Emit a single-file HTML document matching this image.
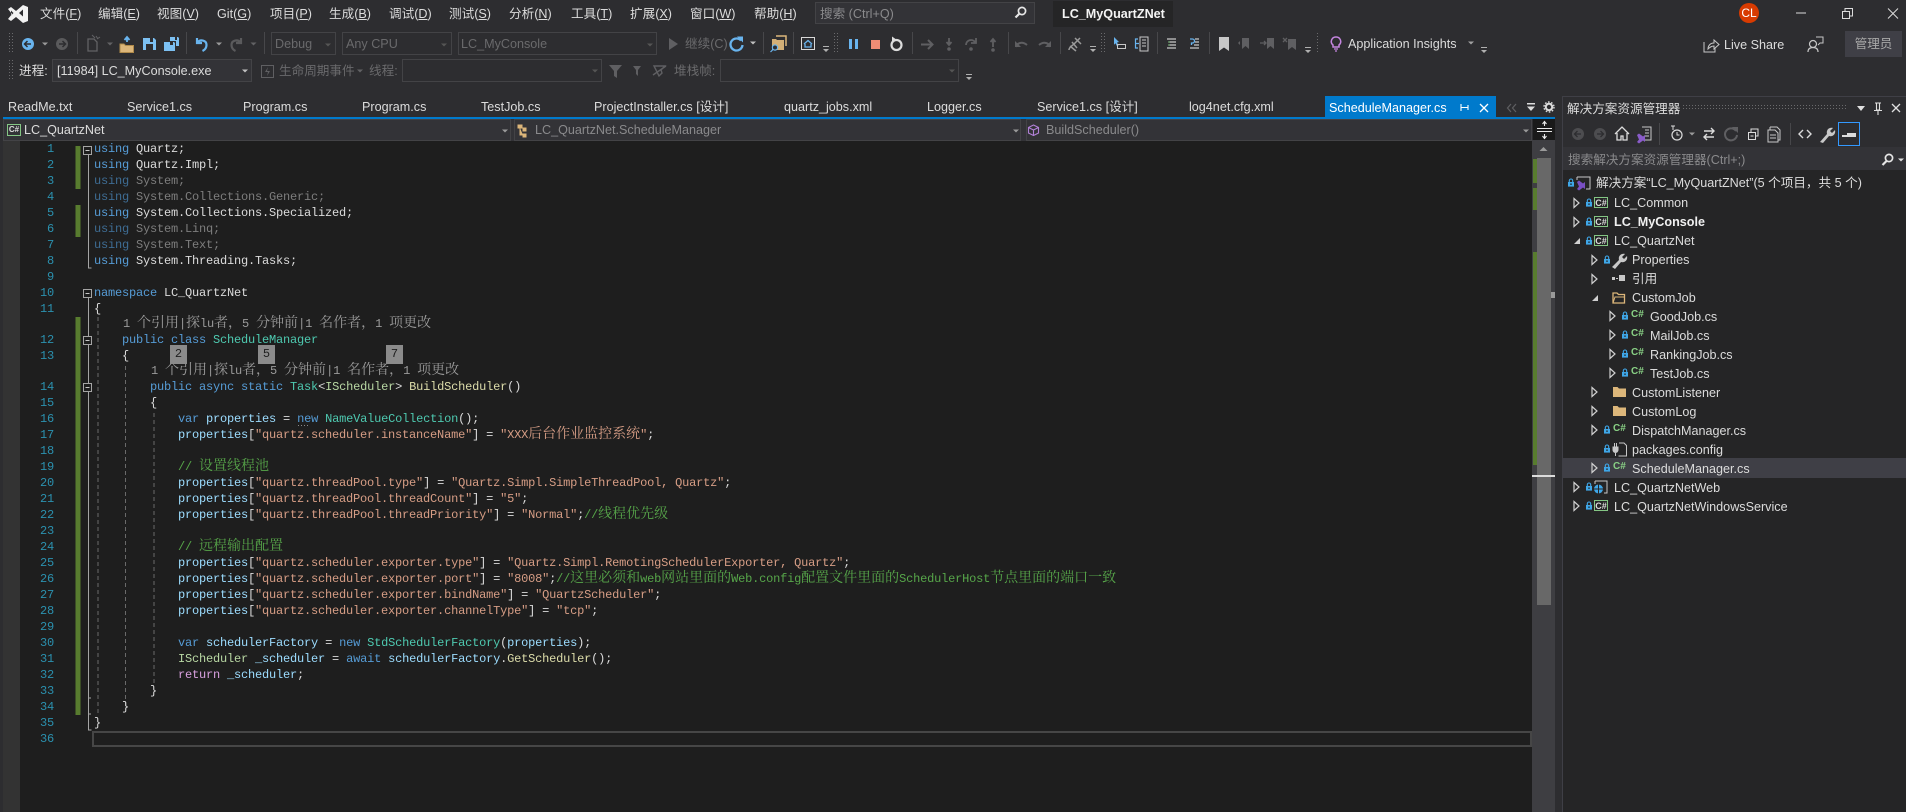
<!DOCTYPE html>
<html><head><meta charset="utf-8"><title>LC_MyQuartZNet</title>
<style>
html,body{margin:0;padding:0;width:1906px;height:812px;overflow:hidden;background:#2d2d30}
#r{position:relative;width:1906px;height:812px;overflow:hidden;font:12.6px/16px "Liberation Sans","Noto Sans CJK SC",sans-serif;color:#dcdcdc}
svg{position:absolute;left:0;top:0}
.t{position:absolute;white-space:nowrap}
.d{color:#6a6a6c}
.m{color:#8a8a8c}
.c{position:absolute;left:94px;white-space:pre;font:12px/16px "Liberation Mono","Noto Serif CJK SC",monospace;letter-spacing:-.2px;color:#dcdcdc}
.c i{font:normal 14px/0 "Noto Serif CJK SC","Noto Sans CJK SC",serif;letter-spacing:0}
.n{position:absolute;left:0;width:54px;text-align:right;font:12px/16px "Liberation Mono",monospace;letter-spacing:-.2px;color:#2b91af}
.k{color:#569cd6}.y{color:#4ec9b0}.v{color:#9cdcfe}.s{color:#d69d85}.g{color:#57a64a}.f{color:#dcdcaa}.b{color:#b8d7a3}.e{color:#d8a0df}.x{color:#3e6c93}.z{color:#7d7d7d}.l{color:#9a9a9a}
.box{position:absolute;background:#8b8b8b;color:#1e1e1e;text-align:center;width:17px;height:19px;font:12px/19px "Liberation Mono",monospace}
</style></head><body><div id="r">
<svg width="1906" height="812" viewBox="0 0 1906 812" fill="none">
<defs>
<pattern id="dots" width="3" height="3" patternUnits="userSpaceOnUse"><rect width="1" height="1" fill="#6a6a6c"/></pattern>
<path id="tri" d="M-3 -1.5h6l-3 3z"/>
<g id="ovf"><path d="M-3 -3h6v1h-6z M-3 0h6l-3 3z" fill="#b0b0b0"/></g>
<g id="lock"><path d="M-1.7 -1v-1.3a1.7 1.7 0 0 1 3.4 0v1.3" stroke="#3fa7e8" stroke-width="1.1"/><rect x="-3" y="-1" width="6" height="4.6" fill="#3fa7e8"/><rect x="-.6" y=".4" width="1.2" height="1.6" fill="#1e1e1e"/></g>
<path id="hollow" d="M-2 -4.5l5 4.5l-5 4.5z" stroke="#d0d0d0" stroke-width="1.2"/>
<path id="solid" d="M3 -3v6h-6z" fill="#d0d0d0"/>
<g id="fold"><path d="M0 1h4.5l1.5 1.5H13V11H0z" fill="#dcb67a"/></g>
<g id="proj"><rect x=".5" y=".5" width="13" height="10" stroke="#84c684" fill="#252526"/></g>
</defs>

<!-- title search -->
<rect x="815.5" y="2.5" width="219" height="21" fill="#333337" stroke="#434346"/>
<circle cx="1022" cy="11" r="3.6" stroke="#e6e6e6" stroke-width="1.7"/><path d="M1019.5 13.5l-4 4" stroke="#e6e6e6" stroke-width="2.2"/>
<rect x="1053" y="1" width="120" height="26" fill="#252526"/>
<!-- VS logo -->
<path d="M8 9l3-2 5 4 7-6 5 2v14l-5 2-7-6-5 4-3-2 4-5z M23 9.5l-4 3.5 4 3.5z M11 10.5v5l2.5-2.5z" fill="#f2f2f2" fill-rule="evenodd"/>
<!-- window controls -->
<circle cx="1749" cy="13" r="10" fill="#d83b01"/>
<path d="M1796 13h10" stroke="#dcdcdc"/>
<rect x="1842.5" y="11.5" width="7" height="7" stroke="#dcdcdc"/><path d="M1845 11v-2.500h7.500v7.500h-2.500" stroke="#dcdcdc"/>
<path d="M1888 8.500l10 10M1898 8.500l-10 10" stroke="#dcdcdc"/>

<!-- grips -->
<rect x="9" y="33" width="4" height="20" fill="url(#dots)"/>
<rect x="9" y="60" width="4" height="20" fill="url(#dots)"/>
<rect x="834" y="33" width="4" height="20" fill="url(#dots)"/>
<rect x="1101" y="33" width="4" height="20" fill="url(#dots)"/>
<rect x="1316" y="33" width="4" height="20" fill="url(#dots)"/>
<!-- separators -->
<path d="M77.500 32v22M186.500 32v22M264.500 32v22M763.500 32v22M793.500 32v22M912.500 32v22M1008.500 32v22M1060.500 32v22M1157.500 32v22M1209.500 32v22" stroke="#47474a"/>

<!-- toolbar 1 icons -->
<circle cx="28" cy="44" r="6" fill="#69b4ee"/><path d="M31 44h-6M27.500 41l-3 3 3 3" stroke="#2d2d30" stroke-width="1.500"/>
<use href="#tri" x="45" y="44" fill="#9a9a9a"/>
<circle cx="62" cy="44" r="6" fill="#5a5a5c"/><path d="M59 44h6M62.500 41l3 3-3 3" stroke="#2d2d30" stroke-width="1.500"/>
<path d="M88 39h6l3 3v9H88z" stroke="#626265" stroke-width="1.300"/><path d="M92 35l3 3M96 36l2 3M100 37l-3 2" stroke="#626265"/>
<use href="#tri" x="110" y="44" fill="#626265"/>
<path d="M120 44h4l1.500 1.500h8v7h-13.500z" fill="#dcb67a" stroke="#b08a4a"/><path d="M127 42v-4m-2.500 2l2.500-3 2.500 3" stroke="#69b4ee" stroke-width="1.800"/>
<path d="M143 38h7v4h3v-4h1l2 2v10h-13z" fill="#7cc0f2"/><rect x="146" y="44" width="7" height="6" fill="#2d2d30"/>
<path d="M164 42h6v3h3v-3h1l1 1v8h-11z" fill="#7cc0f2"/><path d="M170 37h5v3h2v-3h1l1 1v8h-3v-5h-6z" fill="#7cc0f2"/>
<path d="M197 38v5h5M197.500 42.500c2.500-3.500 9-2.500 9 2.500 0 3-2 5-4 6" stroke="#69b4ee" stroke-width="2.200"/>
<use href="#tri" x="219" y="44" fill="#9a9a9a"/>
<path d="M241 38v5h-5M240.500 42.500c-2.500-3.500-9-2.500-9 2.500 0 3 2 5 4 6" stroke="#5a5a5c" stroke-width="2.200"/>
<use href="#tri" x="253.500" y="44" fill="#626265"/>
<!-- combos -->
<rect x="271.500" y="32.500" width="64" height="22" stroke="#434346" fill="#2d2d30"/>
<use href="#tri" x="328" y="45" fill="#555"/>
<rect x="342.500" y="32.500" width="109" height="22" stroke="#434346" fill="#2d2d30"/>
<use href="#tri" x="444" y="45" fill="#555"/>
<rect x="458.500" y="32.500" width="198" height="22" stroke="#434346" fill="#2d2d30"/>
<use href="#tri" x="650" y="45" fill="#555"/>
<path d="M669 38l9 6-9 6z" fill="#5f5f62"/>
<path d="M741 40.500a6 6 0 1 0 1.500 4.500" stroke="#69b4ee" stroke-width="2.300"/><path d="M737 36.500h6v6z" fill="#69b4ee"/>
<use href="#tri" x="753" y="43" fill="#c0c0c0"/>
<path d="M772 39h4l1 1h7v10h-12z" fill="#dcb67a" opacity=".95"/><path d="M776 36h10v10" stroke="#dcb67a" stroke-width="1.500"/>
<circle cx="775" cy="47.500" r="2.600" stroke="#69b4ee" stroke-width="1.200" fill="#2d2d30"/><path d="M773 49.500l-2.500 2.500" stroke="#69b4ee" stroke-width="1.200"/>
<rect x="801.500" y="37.500" width="13" height="12" stroke="#d8d8d8"/><path d="M804 44l4-3.500 4 3.500M805 44v3h6v-3" stroke="#69b4ee" stroke-width="1.300"/>
<use href="#ovf" x="826" y="49"/>
<rect x="849" y="39" width="3" height="10" fill="#69b4ee"/><rect x="855" y="39" width="3" height="10" fill="#69b4ee"/>
<rect x="871" y="40" width="9" height="9" fill="#f08c75"/>
<circle cx="896.500" cy="45" r="5" stroke="#dcdcdc" stroke-width="2.200"/><path d="M892 36.500l5 3.500-5 2.500z" fill="#dcdcdc"/>
<path d="M921 44.500h11M928 40l4.500 4.500-4.500 4.500" stroke="#5f5f62" stroke-width="2"/>
<path d="M949 38v6M946.500 42l2.500 3 2.500-3" stroke="#5f5f62" stroke-width="1.800"/><circle cx="949" cy="49" r="1.800" fill="#5f5f62"/>
<path d="M966 45a5 5 0 0 1 9-3M976 38v5h-5" stroke="#5f5f62" stroke-width="1.800"/><circle cx="971" cy="49" r="1.800" fill="#5f5f62"/>
<path d="M993 47v-7M990.500 42l2.500-3 2.500 3" stroke="#5f5f62" stroke-width="1.800"/><circle cx="993" cy="50" r="1.800" fill="#5f5f62"/>
<path d="M1016 47c1-4 6-6 11-2" stroke="#5f5f62" stroke-width="2"/><path d="M1015 41v6h6z" fill="#5f5f62"/>
<path d="M1050 47c-1-4-6-6-11-2" stroke="#5f5f62" stroke-width="2"/><path d="M1051 41v6h-6z" fill="#5f5f62"/>
<path d="M1069 50c0-3 3-4 5-6s3-3 6-6M1072 42l5 6M1070 46l6 5M1075 38l6 6" stroke="#9a9a9a" stroke-width="1.500"/>
<use href="#ovf" x="1093" y="49"/>
<path d="M1114 37l5 5-2 .5 1.500 3-1.500.8-1.500-3-1.500 1.500z" fill="#69b4ee"/><rect x="1117.500" y="44.500" width="8" height="4" stroke="#c8c8c8"/>
<path d="M1138 39h-2.500v9h2.500M1136 43.500h3" stroke="#69b4ee" stroke-width="1.200"/><path d="M1140 37h8v14h-8zM1142 40h4M1142 43h4M1142 46h4" stroke="#c8c8c8"/>
<path d="M1167 39h9M1169 42h7M1169 45h7M1167 48h9" stroke="#c8c8c8" stroke-width="1.200"/><path d="M1168 42h2M1168 45h2" stroke="#7ab87a"/>
<path d="M1190 39h2.500a1.500 1.500 0 0 1 0 4h-1v2" stroke="#69b4ee" stroke-width="1.300"/><path d="M1195 39h4M1195 42h4M1194 45h5M1190 48h9" stroke="#c8c8c8" stroke-width="1.200"/>
<path d="M1219 37h10v14l-5-3.500-5 3.500z" fill="#c8c8c8"/>
<path d="M1242 38h7v11l-3.500-3-3.500 3zM1240 41l-2 2 2 2" fill="#5f5f62"/>
<path d="M1267 38h7v11l-3.500-3-3.500 3z" fill="#5f5f62"/><path d="M1264 41l2 2-2 2M1260 43h5" stroke="#5f5f62" stroke-width="1.300"/>
<path d="M1288 39h8v11l-4-3-4 3z" fill="#5f5f62"/><path d="M1283 38l4 4M1287 38l-4 4" stroke="#5f5f62" stroke-width="1.300"/>
<use href="#ovf" x="1308" y="50"/>
<path d="M1336 37a4.500 4.500 0 0 1 3 8v2h-6v-2a4.500 4.500 0 0 1 3-8z" stroke="#c586e0" stroke-width="1.500"/><path d="M1334 49h4M1335 51h2" stroke="#c586e0" stroke-width="1.200"/>
<use href="#tri" x="1471" y="43" fill="#a0a0a0"/>
<use href="#ovf" x="1484" y="50"/>
<path d="M1704 42v10h11v-4" stroke="#c8c8c8"/><path d="M1708 49c0-3 2-6 6-6v-3l5 4.500-5 4.500v-3c-2 0-4 1-6 3z" stroke="#c8c8c8"/>
<circle cx="1813" cy="44" r="3.500" stroke="#c8c8c8" stroke-width="1.200"/><path d="M1808 52c0-3 2-4.500 5-4.500s5 1.500 5 4.500" stroke="#c8c8c8" stroke-width="1.200"/><path d="M1816 37h7v6h-3l-2 2" stroke="#c8c8c8"/>
<rect x="1845" y="31" width="57" height="26" fill="#3f3f46"/>

<!-- toolbar 2 -->
<rect x="52.500" y="59.500" width="199" height="22" stroke="#434346" fill="#333337"/>
<use href="#tri" x="245" y="71" fill="#c0c0c0"/>
<rect x="261.500" y="65.500" width="12" height="12" stroke="#5f5f62"/><path d="M268 67l-3 5h3l-1 4 3-5h-3z" fill="#5f5f62"/>
<use href="#tri" x="360" y="71" fill="#626265"/>
<rect x="402.500" y="59.500" width="199" height="22" stroke="#434346"/>
<use href="#tri" x="595" y="71" fill="#555"/>
<path d="M609 65h13l-5 6v7l-3-2v-5z" fill="#5f5f62"/><path d="M633 66h8l-3 4v6l-2-2v-4z" fill="#5f5f62"/>
<path d="M654 66h11l-4 4 1 3-3 3zM653 75l13-9" stroke="#5f5f62" stroke-width="1.400"/>
<rect x="720.500" y="59.500" width="238" height="22" stroke="#434346"/>
<use href="#tri" x="952" y="71" fill="#555"/>
<use href="#ovf" x="969" y="77"/>

<!-- tab well -->
<rect x="1325" y="96" width="171" height="21" fill="#007acc"/>
<rect x="3" y="117" width="1552" height="2" fill="#007acc"/>
<path d="M1461 104v7M1461 107.500h7M1468 105v5" stroke="#fff" stroke-width="1.100"/>
<path d="M1480 104l8 8M1488 104l-8 8" stroke="#fff" stroke-width="1.300"/>
<path d="M1511 104l-3.500 4 3.500 4M1516 104l-3.500 4 3.500 4" stroke="#5f5f62" stroke-width="1.200"/>
<path d="M1527 103h8v1.500h-8zM1527 106.500h8l-4 4.500z" fill="#dcdcdc"/>
<circle cx="1549" cy="107" r="3.200" stroke="#dcdcdc" stroke-width="2"/><circle cx="1549" cy="107" r="5" stroke="#dcdcdc" stroke-width="1.400" stroke-dasharray="1.600 1.600"/>

<!-- nav bar -->
<rect x="3" y="119" width="1529" height="22" fill="#333337"/>
<rect x="3.500" y="119.500" width="507" height="21" stroke="#434346"/>
<rect x="514.500" y="119.500" width="506" height="21" stroke="#434346"/>
<rect x="1026.500" y="119.500" width="505" height="21" stroke="#434346"/>
<rect x="7.500" y="124.500" width="13" height="11" stroke="#84c684"/>
<use href="#tri" x="505" y="131" fill="#9a9a9a"/><use href="#tri" x="1016" y="131" fill="#9a9a9a"/><use href="#tri" x="1526" y="131" fill="#9a9a9a"/>
<path d="M518 125h4v3h-4zM523 128h3v3h-3zM523 134h3v3h-3zM520 128v7h3" fill="#dcb67a" stroke="#dcb67a"/>
<path d="M1033.500 125l5 2.500v5.500l-5 2.500-5-2.500v-5.500z M1028.500 127.500l5 2.500 5-2.500M1033.500 130v5.500" stroke="#b180d7" stroke-width="1.100"/>
<rect x="1533" y="119" width="22" height="21" fill="#1a1a1a"/>
<path d="M1537 128.500h15M1537 131.500h15M1544.500 121v5M1542.500 124l2-2.500 2 2.500M1544.500 139v-5M1542.500 136l2 2.500 2-2.500" stroke="#e8e8e8" stroke-width="1.100"/>

<!-- editor -->
<rect x="0" y="141" width="3" height="671" fill="#2d2d30"/>
<rect x="3" y="141" width="17" height="671" fill="#333333"/>
<rect x="20" y="141" width="1512" height="671" fill="#1e1e1e"/>
<rect x="75.500" y="146" width="5" height="43" fill="#587c2f"/>
<rect x="75.500" y="205" width="5" height="32" fill="#587c2f"/>
<rect x="75.500" y="317" width="5" height="398" fill="#587c2f"/>
<!-- outlining -->
<path d="M88.500 155v113h3M88.500 298v432h3M91 698h-2.500M91 714h-2.500" stroke="#a5a5a5"/>
<g stroke="#a5a5a5" fill="#1e1e1e">
<rect x="83.500" y="146.500" width="8" height="8"/><rect x="83.500" y="289.500" width="8" height="8"/><rect x="83.500" y="336.500" width="8" height="8"/><rect x="83.500" y="383.500" width="8" height="8"/>
</g>
<path d="M85.500 150.500h4M85.500 293.500h4M85.500 340.500h4M85.500 387.500h4" stroke="#c8c8c8"/>
<path d="M98 317v396M125.500 366v340M154 413v270" stroke="#6a6a6a" stroke-dasharray="4 3"/>
<path d="M298 425.500h10" stroke="#8a8a8a" stroke-dasharray="1 2"/>
<rect x="93" y="732" width="1438" height="14" stroke="#464646" stroke-width="2"/>

<!-- scrollbar -->
<rect x="1532" y="140" width="23" height="672" fill="#3e3e42"/>
<path d="M1543.500 147l4 4h-8z" fill="#9a9a9a"/>
<rect x="1537" y="158" width="14" height="447" fill="#686868"/>
<rect x="1533" y="159" width="4" height="24" fill="#587c2f"/>
<rect x="1533" y="188" width="4" height="22" fill="#587c2f"/>
<rect x="1533" y="252" width="4" height="213" fill="#587c2f"/>
<rect x="1532" y="475" width="23" height="2" fill="#dcdcdc"/>
<rect x="1551" y="292" width="4" height="6" fill="#9a9a9a"/>

<!-- solution panel -->
<rect x="1562" y="118" width="344" height="694" fill="#2d2d30"/>
<rect x="1562" y="96" width="344" height="23" fill="#2d2d30"/>
<path d="M1562.500 96v716M1562 96.500h344" stroke="#3f3f46"/>
<rect x="1683" y="105" width="165" height="6" fill="url(#dots)"/>
<path d="M1857 106h8l-4 5z" fill="#e0e0e0"/>
<path d="M1875 103h6M1876.500 103v7h3v-7M1874 110.500h8M1878 110v5" stroke="#e0e0e0" stroke-width="1.100"/>
<path d="M1892 104l8 8M1900 104l-8 8" stroke="#e0e0e0" stroke-width="1.300"/>
<circle cx="1578" cy="134" r="6" fill="#4d4d50"/><path d="M1581 134h-6M1577.500 131l-3 3 3 3" stroke="#2d2d30" stroke-width="1.300"/>
<circle cx="1600" cy="134" r="6" fill="#4d4d50"/><path d="M1597 134h6M1600.500 131l3 3-3 3" stroke="#2d2d30" stroke-width="1.300"/>
<path d="M1615 134l7-7 7 7M1617 133v7h4v-4h2v4h4v-7" stroke="#dcdcdc" stroke-width="1.300"/>
<path d="M1642 127h9v13h-7" stroke="#c8c8c8"/><path d="M1645 130h4M1645 133h4M1645 136h4" stroke="#c8c8c8"/><path d="M1637 135l2-1.500 4 3 2-1.500v7l-2-1.500-4 3-2-1.500 2-2.500z" fill="#8a5cc9"/>
<path d="M1659.500 123v22M1790.500 123v22" stroke="#47474a"/>
<circle cx="1677" cy="135" r="5" stroke="#dcdcdc" stroke-width="1.200"/><path d="M1677 132v3h2.500M1671 126h4M1673 126v4" stroke="#dcdcdc"/>
<use href="#tri" x="1692" y="134" fill="#9a9a9a"/>
<path d="M1704 131h10M1711 128l3 3-3 3M1714 137h-10M1707 134l-3 3 3 3" stroke="#dcdcdc" stroke-width="1.400"/>
<path d="M1736 131a6 6 0 1 0 1 4" stroke="#5f5f62" stroke-width="2"/><path d="M1732 127h6v6z" fill="#5f5f62"/>
<rect x="1748.500" y="132.500" width="7" height="7" stroke="#dcdcdc"/><path d="M1751 132v-3h7v7h-2.500" stroke="#dcdcdc"/><path d="M1750.500 136h3" stroke="#dcdcdc"/>
<path d="M1770 127h7l3 3v10h-3M1770 127v3" stroke="#c8c8c8"/><path d="M1768 130h7l3 3v9h-10z" stroke="#c8c8c8" fill="#2d2d30"/><path d="M1770 135h6M1770 138h6" stroke="#c8c8c8"/>
<path d="M1803 130l-4 4 4 4M1807 130l4 4-4 4" stroke="#dcdcdc" stroke-width="1.400"/>
<path d="M1820 142l7-8c-1-4 2-7 6-6l-3 3 2 2 3-3c1 4-2 7-6 6l-6 7z" fill="#c8c8c8"/>
<rect x="1838.500" y="122.500" width="21" height="23" stroke="#3399ff"/>
<path d="M1842 135h5v-2h9v4h-14z" fill="#dcdcdc"/>
<rect x="1563" y="147" width="343" height="23" fill="#333337"/>
<circle cx="1889" cy="158" r="3.600" stroke="#e6e6e6" stroke-width="1.700"/><path d="M1886.500 161l-4 4" stroke="#e6e6e6" stroke-width="2.200"/>
<use href="#tri" x="1901" y="160" fill="#e0e0e0"/>
<rect x="1563" y="170" width="343" height="642" fill="#252526"/>
<rect x="1563" y="458" width="343" height="20" fill="#3f3f46"/>

<!-- tree icons -->
<use href="#lock" x="1571" y="183"/>
<path d="M1577 177h13v12h-4M1577 177v3" stroke="#c8c8c8"/><path d="M1577 182l2-1.500 4 3 2-1.500v7l-2-1.500-4 3-2-1.500 2-2.500z" fill="#7a4fc4"/>

<use href="#hollow" x="1576" y="203"/><use href="#lock" x="1589" y="203"/><use href="#proj" x="1594" y="197"/>
<use href="#hollow" x="1576" y="222"/><use href="#lock" x="1589" y="222"/><use href="#proj" x="1594" y="216"/>
<use href="#solid" x="1577" y="241"/><use href="#lock" x="1589" y="241"/><use href="#proj" x="1594" y="235"/>
<use href="#hollow" x="1594" y="260"/><use href="#lock" x="1607" y="260"/>
<path d="M1612 267l7-7c-1-4 2-7 6-6l-3 3 2 2 3-3c1 4-2 7-6 6l-6 7z" fill="#c8c8c8"/>
<use href="#hollow" x="1594" y="279"/><rect x="1612" y="277" width="3" height="3" fill="#c8c8c8"/><rect x="1616" y="278" width="2" height="1" fill="#c8c8c8"/><rect x="1619" y="275" width="6" height="6" fill="#c8c8c8"/>
<use href="#solid" x="1595" y="298"/><path d="M1613 293h4l1.500 1.500h6V303h-11.500z" stroke="#dcb67a" stroke-width="1.300"/><path d="M1613 303l2-6h10" stroke="#dcb67a"/>
<use href="#hollow" x="1612" y="316"/><use href="#lock" x="1625" y="316"/>
<use href="#hollow" x="1612" y="335"/><use href="#lock" x="1625" y="335"/>
<use href="#hollow" x="1612" y="354"/><use href="#lock" x="1625" y="354"/>
<use href="#hollow" x="1612" y="373"/><use href="#lock" x="1625" y="373"/>
<use href="#hollow" x="1594" y="392"/><use href="#fold" x="1613" y="386"/>
<use href="#hollow" x="1594" y="411"/><use href="#fold" x="1613" y="405"/>
<use href="#hollow" x="1594" y="430"/><use href="#lock" x="1607" y="430"/>
<use href="#lock" x="1607" y="449"/>
<path d="M1619 443h5l1.500 1.500h0l1 1V456h-8" stroke="#c8c8c8"/><path d="M1613 447v3a2.500 2.500 0 0 0 5 0v-3zM1614.500 443v4M1616.500 443v4M1615.500 452v4" stroke="#c8c8c8" fill="#c8c8c8"/>
<use href="#hollow" x="1594" y="468"/><use href="#lock" x="1607" y="468"/>
<use href="#hollow" x="1576" y="487"/><use href="#lock" x="1589" y="487"/>
<path d="M1595 481h12v12h-3M1595 481v3" stroke="#c8c8c8"/><circle cx="1598.500" cy="489" r="4.500" fill="#3fa7e8"/><path d="M1594 489h9M1598.500 484.500v9" stroke="#252526"/>
<use href="#hollow" x="1576" y="506"/><use href="#lock" x="1589" y="506"/><use href="#proj" x="1594" y="500"/>
</svg>

<!-- menu -->
<div class="t" style="left:40px;top:6px">文件(<u>F</u>)</div>
<div class="t" style="left:98px;top:6px">编辑(<u>E</u>)</div>
<div class="t" style="left:157px;top:6px">视图(<u>V</u>)</div>
<div class="t" style="left:217px;top:6px">Git(<u>G</u>)</div>
<div class="t" style="left:270px;top:6px">项目(<u>P</u>)</div>
<div class="t" style="left:329px;top:6px">生成(<u>B</u>)</div>
<div class="t" style="left:389px;top:6px">调试(<u>D</u>)</div>
<div class="t" style="left:449px;top:6px">测试(<u>S</u>)</div>
<div class="t" style="left:509px;top:6px">分析(<u>N</u>)</div>
<div class="t" style="left:571px;top:6px">工具(<u>T</u>)</div>
<div class="t" style="left:630px;top:6px">扩展(<u>X</u>)</div>
<div class="t" style="left:690px;top:6px">窗口(<u>W</u>)</div>
<div class="t" style="left:754px;top:6px">帮助(<u>H</u>)</div>
<div class="t m" style="left:820px;top:6px">搜索 (Ctrl+Q)</div>
<div class="t" style="left:1062px;top:6px;font-weight:bold;color:#f4f4f4">LC_MyQuartZNet</div>
<div class="t" style="left:1741px;top:5px;width:16px;text-align:center;color:#fff;font-size:12px">CL</div>

<!-- toolbar text -->
<div class="t d" style="left:275px;top:36px">Debug</div>
<div class="t d" style="left:346px;top:36px">Any CPU</div>
<div class="t d" style="left:461px;top:36px">LC_MyConsole</div>
<div class="t d" style="left:685px;top:36px">继续(C)</div>
<div class="t" style="left:1348px;top:36px">Application Insights</div>
<div class="t" style="left:1724px;top:37px">Live Share</div>
<div class="t" style="left:1845px;top:36px;width:57px;text-align:center;color:#a8a8a8">管理员</div>
<div class="t" style="left:19px;top:63px">进程:</div>
<div class="t" style="left:57px;top:63px">[11984] LC_MyConsole.exe</div>
<div class="t d" style="left:279px;top:63px">生命周期事件</div>
<div class="t d" style="left:369px;top:63px">线程:</div>
<div class="t d" style="left:674px;top:63px">堆栈帧:</div>

<!-- tabs -->
<div class="t" style="left:8px;top:99px">ReadMe.txt</div>
<div class="t" style="left:127px;top:99px">Service1.cs</div>
<div class="t" style="left:243px;top:99px">Program.cs</div>
<div class="t" style="left:362px;top:99px">Program.cs</div>
<div class="t" style="left:481px;top:99px">TestJob.cs</div>
<div class="t" style="left:594px;top:99px">ProjectInstaller.cs [设计]</div>
<div class="t" style="left:784px;top:99px">quartz_jobs.xml</div>
<div class="t" style="left:927px;top:99px">Logger.cs</div>
<div class="t" style="left:1037px;top:99px">Service1.cs [设计]</div>
<div class="t" style="left:1189px;top:99px">log4net.cfg.xml</div>
<div class="t" style="left:1329px;top:100px;color:#fff">ScheduleManager.cs</div>

<!-- nav -->
<div class="t" style="left:8px;top:122px;width:12px;text-align:center;color:#dcdcdc;font-size:8px;font-weight:bold">C#</div>
<div class="t" style="left:24px;top:122px">LC_QuartzNet</div>
<div class="t m" style="left:535px;top:122px">LC_QuartzNet.ScheduleManager</div>
<div class="t m" style="left:1046px;top:122px">BuildScheduler()</div>

<!-- panel text -->
<div class="t" style="left:1567px;top:101px">解决方案资源管理器</div>
<div class="t m" style="left:1568px;top:152px">搜索解决方案资源管理器(Ctrl+;)</div>
<div class="t" style="left:1596px;top:175px">解决方案“LC_MyQuartZNet”(5 个项目&#xFF0C;共 5 个)</div>
<div class="t" style="left:1614px;top:195px">LC_Common</div>
<div class="t" style="left:1614px;top:214px;font-weight:bold;color:#f0f0f0">LC_MyConsole</div>
<div class="t" style="left:1614px;top:233px">LC_QuartzNet</div>
<div class="t" style="left:1632px;top:252px">Properties</div>
<div class="t" style="left:1632px;top:271px">引用</div>
<div class="t" style="left:1632px;top:290px">CustomJob</div>
<div class="t" style="left:1650px;top:309px">GoodJob.cs</div>
<div class="t" style="left:1650px;top:328px">MailJob.cs</div>
<div class="t" style="left:1650px;top:347px">RankingJob.cs</div>
<div class="t" style="left:1650px;top:366px">TestJob.cs</div>
<div class="t" style="left:1632px;top:385px">CustomListener</div>
<div class="t" style="left:1632px;top:404px">CustomLog</div>
<div class="t" style="left:1632px;top:423px">DispatchManager.cs</div>
<div class="t" style="left:1632px;top:442px">packages.config</div>
<div class="t" style="left:1632px;top:461px">ScheduleManager.cs</div>
<div class="t" style="left:1614px;top:480px">LC_QuartzNetWeb</div>
<div class="t" style="left:1614px;top:499px">LC_QuartzNetWindowsService</div>
<!-- project/file C# glyph labels -->
<div class="t" style="left:1595px;top:195px;width:12px;text-align:center;font-size:9px;font-weight:bold">C#</div>
<div class="t" style="left:1595px;top:214px;width:12px;text-align:center;font-size:9px;font-weight:bold">C#</div>
<div class="t" style="left:1595px;top:233px;width:12px;text-align:center;font-size:9px;font-weight:bold">C#</div>
<div class="t" style="left:1595px;top:498px;width:12px;text-align:center;font-size:9px;font-weight:bold">C#</div>
<div class="t" style="left:1631px;top:307px;font-size:10px;font-weight:bold;color:#89d185">C#</div>
<div class="t" style="left:1631px;top:326px;font-size:10px;font-weight:bold;color:#89d185">C#</div>
<div class="t" style="left:1631px;top:345px;font-size:10px;font-weight:bold;color:#89d185">C#</div>
<div class="t" style="left:1631px;top:364px;font-size:10px;font-weight:bold;color:#89d185">C#</div>
<div class="t" style="left:1613px;top:421px;font-size:10px;font-weight:bold;color:#89d185">C#</div>
<div class="t" style="left:1613px;top:459px;font-size:10px;font-weight:bold;color:#89d185">C#</div>

<!-- line numbers -->
<div class="n" style="top:141px">1</div><div class="n" style="top:157px">2</div><div class="n" style="top:173px">3</div><div class="n" style="top:189px">4</div><div class="n" style="top:205px">5</div><div class="n" style="top:221px">6</div><div class="n" style="top:237px">7</div><div class="n" style="top:253px">8</div><div class="n" style="top:269px">9</div><div class="n" style="top:285px">10</div><div class="n" style="top:301px">11</div><div class="n" style="top:332px">12</div><div class="n" style="top:348px">13</div><div class="n" style="top:379px">14</div><div class="n" style="top:395px">15</div><div class="n" style="top:411px">16</div><div class="n" style="top:427px">17</div><div class="n" style="top:443px">18</div><div class="n" style="top:459px">19</div><div class="n" style="top:475px">20</div><div class="n" style="top:491px">21</div><div class="n" style="top:507px">22</div><div class="n" style="top:523px">23</div><div class="n" style="top:539px">24</div><div class="n" style="top:555px">25</div><div class="n" style="top:571px">26</div><div class="n" style="top:587px">27</div><div class="n" style="top:603px">28</div><div class="n" style="top:619px">29</div><div class="n" style="top:635px">30</div><div class="n" style="top:651px">31</div><div class="n" style="top:667px">32</div><div class="n" style="top:683px">33</div><div class="n" style="top:699px">34</div><div class="n" style="top:715px">35</div><div class="n" style="top:731px">36</div>

<!-- code -->
<div class="c" style="top:141px"><span class="k">using</span> Quartz;</div>
<div class="c" style="top:157px"><span class="k">using</span> Quartz.Impl;</div>
<div class="c z" style="top:173px"><span class="x">using</span> System;</div>
<div class="c z" style="top:189px"><span class="x">using</span> System.Collections.Generic;</div>
<div class="c" style="top:205px"><span class="k">using</span> System.Collections.Specialized;</div>
<div class="c z" style="top:221px"><span class="x">using</span> System.Linq;</div>
<div class="c z" style="top:237px"><span class="x">using</span> System.Text;</div>
<div class="c" style="top:253px"><span class="k">using</span> System.Threading.Tasks;</div>
<div class="c" style="top:285px"><span class="k">namespace</span> LC_QuartzNet</div>
<div class="c" style="top:301px">{</div>
<div class="c l" style="top:316px;left:123px">1 <i>个引用</i>|<i>探</i>lu<i>者&#xFF0C;</i>5 <i>分钟前</i>|1 <i>名作者&#xFF0C;</i>1 <i>项更改</i></div>
<div class="c" style="top:332px;left:122px"><span class="k">public class</span> <span class="y">ScheduleManager</span></div>
<div class="c" style="top:348px;left:122px">{</div>
<div class="c l" style="top:363px;left:151px">1 <i>个引用</i>|<i>探</i>lu<i>者&#xFF0C;</i>5 <i>分钟前</i>|1 <i>名作者&#xFF0C;</i>1 <i>项更改</i></div>
<div class="c" style="top:379px;left:150px"><span class="k">public async static</span> <span class="y">Task</span>&lt;<span class="b">IScheduler</span>&gt; <span class="f">BuildScheduler</span>()</div>
<div class="c" style="top:395px;left:150px">{</div>
<div class="c" style="top:411px;left:178px"><span class="k">var</span> <span class="v">properties</span> = <span class="k">new</span> <span class="y">NameValueCollection</span>();</div>
<div class="c" style="top:427px;left:178px"><span class="v">properties</span>[<span class="s">"quartz.scheduler.instanceName"</span>] = <span class="s">"XXX<i>后台作业监控系统</i>"</span>;</div>
<div class="c g" style="top:459px;left:178px">// <i>设置线程池</i></div>
<div class="c" style="top:475px;left:178px"><span class="v">properties</span>[<span class="s">"quartz.threadPool.type"</span>] = <span class="s">"Quartz.Simpl.SimpleThreadPool, Quartz"</span>;</div>
<div class="c" style="top:491px;left:178px"><span class="v">properties</span>[<span class="s">"quartz.threadPool.threadCount"</span>] = <span class="s">"5"</span>;</div>
<div class="c" style="top:507px;left:178px"><span class="v">properties</span>[<span class="s">"quartz.threadPool.threadPriority"</span>] = <span class="s">"Normal"</span>;<span class="g">//<i>线程优先级</i></span></div>
<div class="c g" style="top:539px;left:178px">// <i>远程输出配置</i></div>
<div class="c" style="top:555px;left:178px"><span class="v">properties</span>[<span class="s">"quartz.scheduler.exporter.type"</span>] = <span class="s">"Quartz.Simpl.RemotingSchedulerExporter, Quartz"</span>;</div>
<div class="c" style="top:571px;left:178px"><span class="v">properties</span>[<span class="s">"quartz.scheduler.exporter.port"</span>] = <span class="s">"8008"</span>;<span class="g">//<i>这里必须和</i>web<i>网站里面的</i>Web.config<i>配置文件里面的</i>SchedulerHost<i>节点里面的端口一致</i></span></div>
<div class="c" style="top:587px;left:178px"><span class="v">properties</span>[<span class="s">"quartz.scheduler.exporter.bindName"</span>] = <span class="s">"QuartzScheduler"</span>;</div>
<div class="c" style="top:603px;left:178px"><span class="v">properties</span>[<span class="s">"quartz.scheduler.exporter.channelType"</span>] = <span class="s">"tcp"</span>;</div>
<div class="c" style="top:635px;left:178px"><span class="k">var</span> <span class="v">schedulerFactory</span> = <span class="k">new</span> <span class="y">StdSchedulerFactory</span>(<span class="v">properties</span>);</div>
<div class="c" style="top:651px;left:178px"><span class="b">IScheduler</span> <span class="v">_scheduler</span> = <span class="k">await</span> <span class="v">schedulerFactory</span>.<span class="f">GetScheduler</span>();</div>
<div class="c" style="top:667px;left:178px"><span class="e">return</span> <span class="v">_scheduler</span>;</div>
<div class="c" style="top:683px;left:150px">}</div>
<div class="c" style="top:699px;left:122px">}</div>
<div class="c" style="top:715px">}</div>

<div class="box" style="left:170px;top:345px">2</div>
<div class="box" style="left:258px;top:345px">5</div>
<div class="box" style="left:386px;top:345px">7</div>
</div></body></html>
